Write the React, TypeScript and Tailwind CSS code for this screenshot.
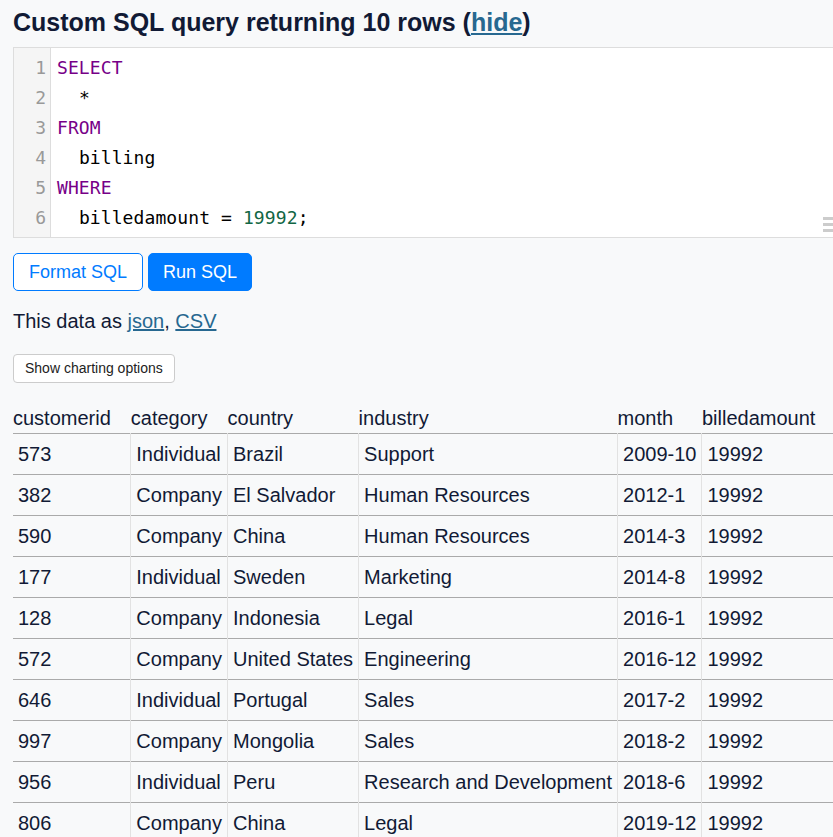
import React from "react";

const SQL_LINES: { indent?: boolean; parts: { t: string; c?: string }[] }[] = [
  { parts: [{ t: "SELECT", c: "text-[#708]" }] },
  { indent: true, parts: [{ t: "*" }] },
  { parts: [{ t: "FROM", c: "text-[#708]" }] },
  { indent: true, parts: [{ t: "billing" }] },
  { parts: [{ t: "WHERE", c: "text-[#708]" }] },
  { indent: true, parts: [{ t: "billedamount = " }, { t: "19992", c: "text-[#164]" }, { t: ";" }] },
];

const COLUMNS = ["customerid", "category", "country", "industry", "month", "billedamount"];

const ROWS: string[][] = [
  ["573", "Individual", "Brazil", "Support", "2009-10", "19992"],
  ["382", "Company", "El Salvador", "Human Resources", "2012-1", "19992"],
  ["590", "Company", "China", "Human Resources", "2014-3", "19992"],
  ["177", "Individual", "Sweden", "Marketing", "2014-8", "19992"],
  ["128", "Company", "Indonesia", "Legal", "2016-1", "19992"],
  ["572", "Company", "United States", "Engineering", "2016-12", "19992"],
  ["646", "Individual", "Portugal", "Sales", "2017-2", "19992"],
  ["997", "Company", "Mongolia", "Sales", "2018-2", "19992"],
  ["956", "Individual", "Peru", "Research and Development", "2018-6", "19992"],
  ["806", "Company", "China", "Legal", "2019-12", "19992"],
];

export default function App() {
  return (
    <div
      className="w-[833px] h-[837px] overflow-hidden bg-[#f8f9fa] text-[#111a35] px-[13px]"
      style={{ fontFamily: '"Liberation Sans", Arial, sans-serif' }}
    >
      {/* Title */}
      <h3 className="text-[25px] font-bold leading-[30px] pt-[7px] whitespace-nowrap">
        Custom SQL query returning 10 rows (
        <a href="#" className="text-[#276890] underline">hide</a>)
      </h3>

      {/* SQL editor */}
      <div className="relative mt-[10px] w-[860px] h-[191px] border border-[#ddd] bg-white flex font-['DejaVu_Sans_Mono',monospace] text-[18px]">
        <div className="w-[37px] shrink-0 bg-[#f5f5f5] border-r border-[#ddd] pt-[5px] pr-[4px] text-right text-[#999]">
          {SQL_LINES.map((_, i) => (
            <div key={i} className="h-[30px] leading-[30px]">{i + 1}</div>
          ))}
        </div>
        <div className="pl-[6px] pt-[5px] text-black tracking-[0.1px]">
          {SQL_LINES.map((line, i) => (
            <div key={i} className="h-[30px] leading-[30px] whitespace-pre">
              {line.indent ? "  " : ""}
              {line.parts.map((p, j) => (
                <span key={j} className={p.c}>{p.t}</span>
              ))}
            </div>
          ))}
        </div>
        {/* resize handle */}
        <div className="absolute left-[809px] top-[169px] flex flex-col gap-[3px]">
          <span className="block w-[14px] h-[3px] bg-[#ccc]" />
          <span className="block w-[14px] h-[3px] bg-[#ccc]" />
          <span className="block w-[14px] h-[3px] bg-[#ccc]" />
        </div>
      </div>

      {/* Buttons */}
      <div className="mt-[15px] flex gap-[5px]">
        <button className="h-[38px] px-[15px] rounded-[5px] border border-[#007bff] bg-white text-[#007bff] text-[18px]">
          Format SQL
        </button>
        <button className="h-[38px] px-[14px] rounded-[5px] border border-[#007bff] bg-[#007bff] text-white text-[18px]">
          Run SQL
        </button>
      </div>

      <p className="mt-[15px] text-[20px] leading-[30px]">
        This data as <a href="#" className="text-[#276890] underline">json</a>,{" "}
        <a href="#" className="text-[#276890] underline">CSV</a>
      </p>

      <button className="mt-[18px] h-[29px] px-[11px] rounded-[4px] border border-[#ccc] bg-white text-[14px] text-[#222]">
        Show charting options
      </button>

      {/* Results table */}
      <table className="mt-[20px] border-collapse text-[20px] leading-[30px]">
        <thead>
          <tr>
            {COLUMNS.map((c) => (
              <th key={c} className="text-left font-normal pl-0 pr-[20px] pb-[0px] whitespace-nowrap align-bottom">
                {c}
              </th>
            ))}
          </tr>
        </thead>
        <tbody>
          {ROWS.map((row, i) => (
            <tr key={i}>
              {row.map((cell, j) => (
                <td
                  key={j}
                  className="p-[5px] border-t border-t-[#aaa] border-r border-r-[#e2e2e2] whitespace-nowrap align-top"
                >
                  {cell}
                </td>
              ))}
            </tr>
          ))}
        </tbody>
      </table>
    </div>
  );
}
